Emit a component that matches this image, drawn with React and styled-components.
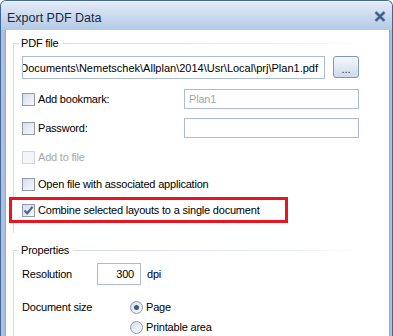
import React from "react";
import styled, { createGlobalStyle } from "styled-components";

const GlobalStyle = createGlobalStyle`
  html, body {
    margin: 0;
    padding: 0;
    background: #ffffff;
  }
  body {
    font-family: "Liberation Sans", Arial, sans-serif;
    font-size: 11px;
    letter-spacing: -0.2px;
    color: #000000;
  }
`;

const PATH = "C:\\Users\\Public\\Documents\\Nemetschek\\Allplan\\2014\\Usr\\Local\\prj\\Plan1.pdf";

const App = () => {
  return (
    <>
      <GlobalStyle />
      <Window>
        <TitleBar>
          <Title>Export PDF Data</Title>
          <CloseIcon />
        </TitleBar>
        <Client>
          <Group>
            <GroupHeader>PDF file</GroupHeader>
            <GroupBody $bottom={10}>
              <PathRow>
                <PathInput>
                  <span>{PATH}</span>
                </PathInput>
                <BrowseButton>...</BrowseButton>
              </PathRow>
              <FieldRow $top={10}>
                <CheckLabel>
                  <CheckBox />
                  Add bookmark:
                </CheckLabel>
                <TextInput $muted>Plan1</TextInput>
              </FieldRow>
              <FieldRow $top={9}>
                <CheckLabel>
                  <CheckBox />
                  Password:
                </CheckLabel>
                <TextInput />
              </FieldRow>
              <FieldRow $top={9}>
                <CheckLabel $disabled>
                  <CheckBox $disabled />
                  Add to file
                </CheckLabel>
              </FieldRow>
              <FieldRow $top={7}>
                <CheckLabel>
                  <CheckBox />
                  Open file with associated application
                </CheckLabel>
              </FieldRow>
              <Highlight>
                <CheckLabel>
                  <CheckBox $checked>
                    <svg width="11" height="11" viewBox="0 0 11 11">
                      <path
                        d="M1.5 5.5 L4.2 8.3 L9.6 1.8"
                        fill="none"
                        stroke="#4a6996"
                        strokeWidth="2.2"
                      />
                    </svg>
                  </CheckBox>
                  Combine selected layouts to a single document
                </CheckLabel>
              </Highlight>
            </GroupBody>
          </Group>

          <Group $top={11}>
            <GroupHeader>Properties</GroupHeader>
            <GroupBody $bottom={4}>
              <PropRow $top={6}>
                <PropLabel $width={75}>Resolution</PropLabel>
                <NumberInput>300</NumberInput>
                <Unit>dpi</Unit>
              </PropRow>
              <PropRow $top={15} $align="flex-start">
                <PropLabel $width={108}>Document size</PropLabel>
                <RadioList>
                  <RadioLabel>
                    <Radio $checked />
                    Page
                  </RadioLabel>
                  <RadioLabel>
                    <Radio />
                    Printable area
                  </RadioLabel>
                </RadioList>
              </PropRow>
            </GroupBody>
          </Group>
        </Client>
      </Window>
    </>
  );
};

export default App;

const CloseIcon = () => (
  <svg width="12" height="11" viewBox="0 0 12 11">
    <path d="M2.5 2 L9.5 9 M9.5 2 L2.5 9" stroke="#a3b7d2" strokeWidth="3.6" strokeLinecap="square" />
    <path d="M2.5 2 L9.5 9 M9.5 2 L2.5 9" stroke="#3d5b86" strokeWidth="2.2" strokeLinecap="square" />
  </svg>
);

const Window = styled.div`
  width: 393px;
  height: 336px;
  box-sizing: border-box;
  overflow: hidden;
  display: flex;
  flex-direction: column;
  border: 1px solid #41679a;
  border-bottom: none;
  border-radius: 6px 6px 0 0;
  background: linear-gradient(to right, #a9c0df, #b9cde7 50%, #a9c0df);
`;

const TitleBar = styled.div`
  height: 28px;
  flex-shrink: 0;
  display: flex;
  align-items: center;
  justify-content: space-between;
  padding: 0 6px 0 6px;
  background: linear-gradient(to bottom, #e3ebf6 0%, #cddcee 45%, #b3c9e5 100%);
  border-top: 1px solid #f4f8fc;
`;

const Title = styled.div`
  font-size: 12.5px;
  letter-spacing: 0;
  color: #152a47;
  padding-top: 3px;
`;

const Client = styled.div`
  flex: 1;
  background: #ffffff;
  margin: 0 2px 0 4px;
  padding: 7px 0 0 7px;
  border-left: 1px solid #8ea8cc;
  border-right: 1px solid #8ea8cc;
`;

const Group = styled.div`
  display: flex;
  flex-direction: column;
  margin-top: ${(p) => p.$top || 0}px;
`;

const GroupHeader = styled.div`
  display: flex;
  align-items: center;
  height: 13px;
  line-height: 13px;
  color: #000000;

  &::before {
    content: "";
    width: 5px;
    align-self: stretch;
    margin-top: 6px;
    margin-right: 2px;
    border-top: 1px solid #d2dde9;
    border-left: 1px solid #d2dde9;
  }

  &::after {
    content: "";
    flex: 1;
    height: 1px;
    margin: 0 20px 0 4px;
    background: linear-gradient(to right, #d2dde9, #e8eef5 70%, #ffffff);
  }
`;

const GroupBody = styled.div`
  display: flex;
  flex-direction: column;
  border-left: 1px solid #d2dde9;
  padding: 0 0 ${(p) => p.$bottom || 0}px 8px;
`;

const PathRow = styled.div`
  display: flex;
  align-items: flex-start;
  margin-top: 6px;
  gap: 8px;
`;

const PathInput = styled.div`
  width: 303px;
  height: 23px;
  box-sizing: border-box;
  border: 1px solid #abbbd2;
  display: flex;
  justify-content: flex-end;
  align-items: center;
  overflow: hidden;
  padding: 0 6px 0 2px;
  white-space: nowrap;
  letter-spacing: 0;

  span {
    flex-shrink: 0;
  }
`;

const BrowseButton = styled.div`
  width: 26px;
  height: 22px;
  box-sizing: border-box;
  border: 1px solid #7f98b9;
  border-radius: 3px;
  background: linear-gradient(to bottom, #f7f9fc 0%, #e1e9f4 50%, #ccdaeb 100%);
  display: flex;
  justify-content: center;
  align-items: center;
  padding-top: 4px;
  font-size: 11px;
  letter-spacing: 0;
  color: #1a2b44;
`;

const FieldRow = styled.div`
  display: flex;
  align-items: center;
  justify-content: space-between;
  height: 20px;
  margin-top: ${(p) => p.$top || 0}px;
  padding-right: 30px;
`;

const CheckLabel = styled.label`
  display: flex;
  align-items: center;
  gap: 3px;
  color: ${(p) => (p.$disabled ? "#a7a7a7" : "#000000")};
  white-space: nowrap;
`;

const CheckBox = styled.span`
  width: 13px;
  height: 13px;
  box-sizing: border-box;
  display: flex;
  align-items: center;
  justify-content: center;
  border: 1px solid ${(p) => (p.$disabled ? "#d0d6df" : "#8f9cb0")};
  background: ${(p) =>
    p.$disabled
      ? "#f4f5f7"
      : "linear-gradient(135deg, #d6dde8 0%, #e9edf3 55%, #f7f9fb 100%)"};
`;

const TextInput = styled.div`
  width: 175px;
  height: 20px;
  box-sizing: border-box;
  border: 1px solid #a9bcd6;
  display: flex;
  align-items: center;
  padding: 0 4px;
  color: ${(p) => (p.$muted ? "#a4a4a4" : "#000000")};
`;

const Highlight = styled.div`
  position: relative;
  z-index: 1;
  margin: 3px 0 0 -13px;
  width: 279px;
  height: 26px;
  box-sizing: border-box;
  border: 3px solid #e5161f;
  background: #ffffff;
  display: flex;
  align-items: center;
  padding-left: 10px;
`;

const PropRow = styled.div`
  display: flex;
  align-items: ${(p) => p.$align || "center"};
  margin-top: ${(p) => p.$top || 0}px;
`;

const PropLabel = styled.div`
  width: ${(p) => p.$width}px;
  flex-shrink: 0;
  line-height: 14px;
`;

const NumberInput = styled.div`
  width: 44px;
  height: 22px;
  box-sizing: border-box;
  border: 1px solid #a9bcd6;
  display: flex;
  align-items: center;
  justify-content: flex-end;
  padding-right: 6px;
`;

const Unit = styled.div`
  margin-left: 6px;
`;

const RadioList = styled.div`
  display: flex;
  flex-direction: column;
  gap: 6px;
`;

const RadioLabel = styled.label`
  display: flex;
  align-items: center;
  gap: 3px;
  height: 14px;
`;

const Radio = styled.span`
  width: 13px;
  height: 13px;
  box-sizing: border-box;
  border-radius: 50%;
  border: 1px solid #8b9bb3;
  background: linear-gradient(135deg, #d3dbe7 0%, #eaeef4 55%, #f8fafc 100%);
  display: flex;
  align-items: center;
  justify-content: center;

  &::after {
    content: "";
    display: ${(p) => (p.$checked ? "block" : "none")};
    width: 5px;
    height: 5px;
    border-radius: 50%;
    background: #3c5886;
  }
`;
